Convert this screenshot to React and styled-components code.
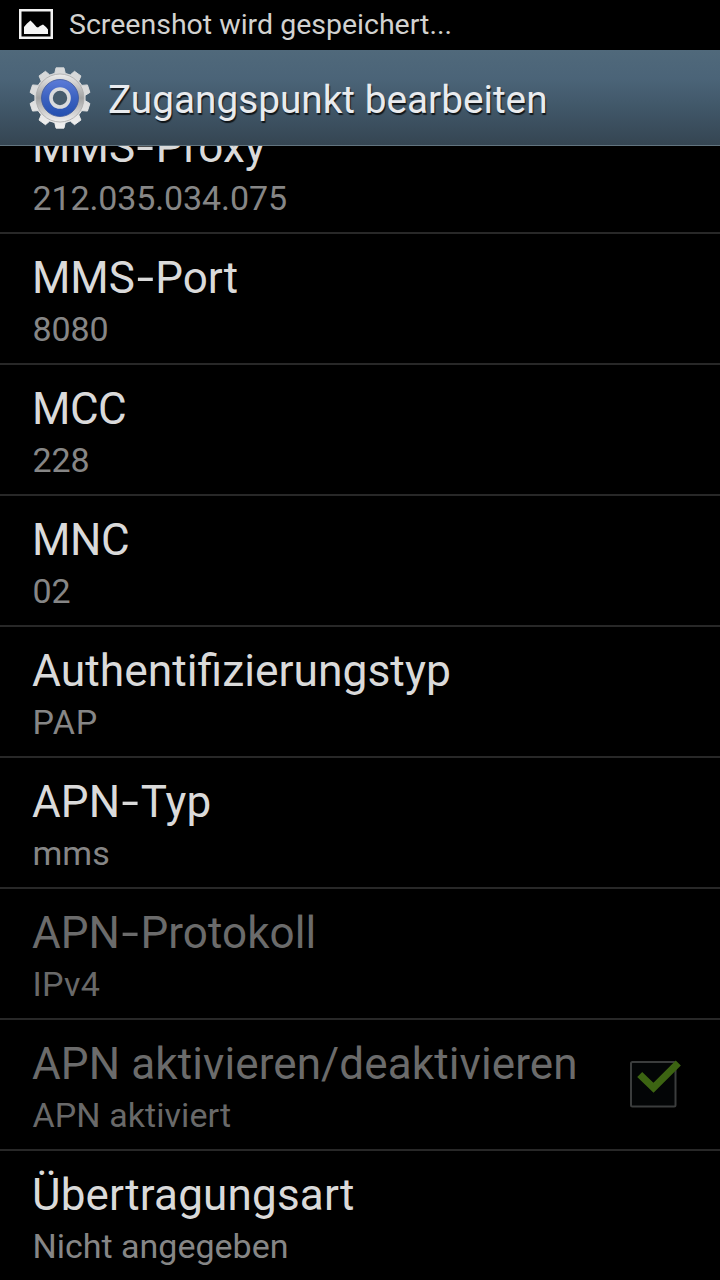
import React from "react";
import styled, { createGlobalStyle } from "styled-components";

const GlobalStyle = createGlobalStyle`
  * { box-sizing: border-box; }
  body {
    margin: 0;
    background: #000;
    font-family: Roboto, "Liberation Sans", sans-serif;
  }
`;

const Screen = styled.div`
  display: flex;
  flex-direction: column;
  width: 720px;
  height: 1280px;
  overflow: hidden;
  background: #000;
`;

const StatusBar = styled.div`
  flex: none;
  display: flex;
  align-items: center;
  height: 50px;
  padding: 0 0 2px 19px;
  gap: 16px;
  color: #d2d2d0;
`;

const StatusText = styled.span`
  margin-top: 2px;
  font-size: 28.5px;
  line-height: 34px;
  white-space: nowrap;
`;

const ActionBar = styled.header`
  flex: none;
  display: flex;
  align-items: center;
  gap: 16px;
  height: 96px;
  padding-left: 28px;
  background: linear-gradient(#50697b 0%, #4b6478 30%, #3f5566 65%, #354552 100%);
  border-bottom: 1px solid #62747f;
`;

const PageTitle = styled.h1`
  margin: 4px 0 0;
  font-size: 38.75px;
  line-height: 46px;
  font-weight: 400;
  white-space: nowrap;
  color: #e9ebee;
  text-shadow: 1px 2px 1px rgba(0, 0, 0, 0.75);
`;

const ListViewport = styled.main`
  flex: 1;
  min-height: 0;
  overflow: hidden;
`;

const PreferenceList = styled.div`
  margin-top: -43px;
`;

const Row = styled.div`
  display: flex;
  align-items: center;
  justify-content: space-between;
  height: 131px;
  padding: 0 38px 0 32px;
  border-bottom: 2px solid #282828;
`;

const RowText = styled.div`
  display: flex;
  flex-direction: column;
  padding-top: 4px;
`;

const Label = styled.span`
  font-size: ${(p) => p.$size}px;
  line-height: 52px;
  white-space: nowrap;
  letter-spacing: ${(p) => p.$spacing}px;
  color: ${(p) => (p.$disabled ? "#6b6b6b" : "#dadada")};
`;

const Hyphen = styled.span`
  display: inline-block;
  width: 20.5px;
  text-align: center;
  transform: scaleX(1.42);
`;

const Summary = styled.span`
  margin-top: 4px;
  padding-left: 0.5px;
  font-size: 34px;
  line-height: 42px;
  white-space: nowrap;
  letter-spacing: ${(p) => p.$spacing}px;
  color: ${(p) => (p.$disabled ? "#696969" : "#868686")};
`;

const PictureIcon = () => (
  <svg width="34" height="30" viewBox="0 0 34 30">
    <rect x="1.25" y="1.25" width="31.5" height="27.5" fill="#000" stroke="#f2f2f2" strokeWidth="2.5" />
    <path d="M5 25V18L8 14.5L11.5 11.5L14 14L17.5 18L19 18.5L21 17L24 15.5L27 18L29 20.5V25Z" fill="#f5f5f5" />
  </svg>
);

const TEETH = 10;

const gearPath = (() => {
  const pts = [];
  for (let i = 0; i < TEETH; i += 1) {
    const mid = (i * 2 * Math.PI) / TEETH - Math.PI / 2;
    [[-0.21, 25.2], [-0.13, 30.4], [0.13, 30.4], [0.21, 25.2]].forEach(([a, r]) => {
      pts.push(`${(32 + r * Math.cos(mid + a)).toFixed(2)} ${(32 + r * Math.sin(mid + a)).toFixed(2)}`);
    });
  }
  return `M${pts.join("L")}Z`;
})();

const SettingsIcon = () => (
  <svg width="64" height="64" viewBox="0 0 64 64">
    <defs>
      <linearGradient id="gear" x1="0" y1="0" x2="0" y2="1">
        <stop offset="0" stopColor="#d6d8d9" />
        <stop offset="0.5" stopColor="#dcdcdc" />
        <stop offset="1" stopColor="#f0f0f0" />
      </linearGradient>
      <linearGradient id="ring" x1="0" y1="0" x2="0" y2="1">
        <stop offset="0" stopColor="#ededed" />
        <stop offset="0.5" stopColor="#a2a2a2" />
        <stop offset="1" stopColor="#f0f0f0" />
      </linearGradient>
      <linearGradient id="disc" x1="0" y1="0" x2="0" y2="1">
        <stop offset="0" stopColor="#5c7cd8" />
        <stop offset="0.5" stopColor="#3c62c0" />
        <stop offset="1" stopColor="#2450b0" />
      </linearGradient>
    </defs>
    <path d={gearPath} fill="url(#gear)" stroke="url(#gear)" strokeWidth="1" strokeLinejoin="round" />
    <circle cx="32" cy="32" r="24" fill="url(#ring)" stroke="#aaaaaa" strokeWidth="0.8" />
    <circle cx="32" cy="32" r="18.5" fill="url(#disc)" stroke="#3a559c" strokeWidth="0.8" />
    <circle cx="32" cy="32" r="9" fill="#465c6d" stroke="#d9dbdd" strokeWidth="3.6" />
  </svg>
);

const CheckBox = styled.svg`
  flex: none;
  margin-bottom: 4px;
`;

const CheckedIcon = () => (
  <CheckBox width="54" height="52" viewBox="0 0 54 52">
    <rect x="3" y="5" width="44.5" height="44.5" rx="1.5" fill="#030506" stroke="#3b3d3d" strokeWidth="2" />
    <path d="M11.7 17.5L25.5 30.8L50.3 6" fill="none" stroke="#3c6412" strokeWidth="7.2" />
  </CheckBox>
);

const preferences = [
  { label: "MMS-Proxy", summary: "212.035.034.075", summarySpacing: -0.12, labelSpacing: 0.1 },
  { label: "MMS-Port", summary: "8080", summarySpacing: -0.12, labelSpacing: -0.05 },
  { label: "MCC", summary: "228", labelSpacing: -0.5, summarySpacing: -0.12 },
  { label: "MNC", summary: "02", labelSpacing: -0.4, summarySpacing: -0.12 },
  { label: "Authentifizierungstyp", summary: "PAP", labelSize: 44.4, summarySpacing: 1 },
  { label: "APN-Typ", summary: "mms", labelSpacing: 0.1 },
  { label: "APN-Protokoll", summary: "IPv4", labelSpacing: 0.05, summarySpacing: 0.3, disabled: true },
  {
    label: "APN aktivieren/deaktivieren",
    labelSpacing: 0.11,
    summary: "APN aktiviert",
    summarySpacing: 0.08,
    disabled: true,
    checked: true,
  },
  { label: "Übertragungsart", labelSpacing: 0.18, summary: "Nicht angegeben" },
];

const Preference = ({ label, summary, labelSize = 44, labelSpacing = 0, summarySpacing = 0, disabled, checked }) => {
  const [head, tail] = label.split("-");
  return (
    <Row>
      <RowText>
        <Label $size={labelSize} $spacing={labelSpacing} $disabled={disabled}>
          {head}
          {tail && <Hyphen>-</Hyphen>}
          {tail}
        </Label>
        <Summary $spacing={summarySpacing} $disabled={disabled}>{summary}</Summary>
      </RowText>
      {checked && <CheckedIcon />}
    </Row>
  );
};

export default function App() {
  return (
    <Screen>
      <GlobalStyle />
      <StatusBar>
        <PictureIcon />
        <StatusText>Screenshot wird gespeichert...</StatusText>
      </StatusBar>
      <ActionBar>
        <SettingsIcon />
        <PageTitle>Zugangspunkt bearbeiten</PageTitle>
      </ActionBar>
      <ListViewport>
        <PreferenceList>
          {preferences.map((item) => (
            <Preference key={item.label} {...item} />
          ))}
        </PreferenceList>
      </ListViewport>
    </Screen>
  );
}
